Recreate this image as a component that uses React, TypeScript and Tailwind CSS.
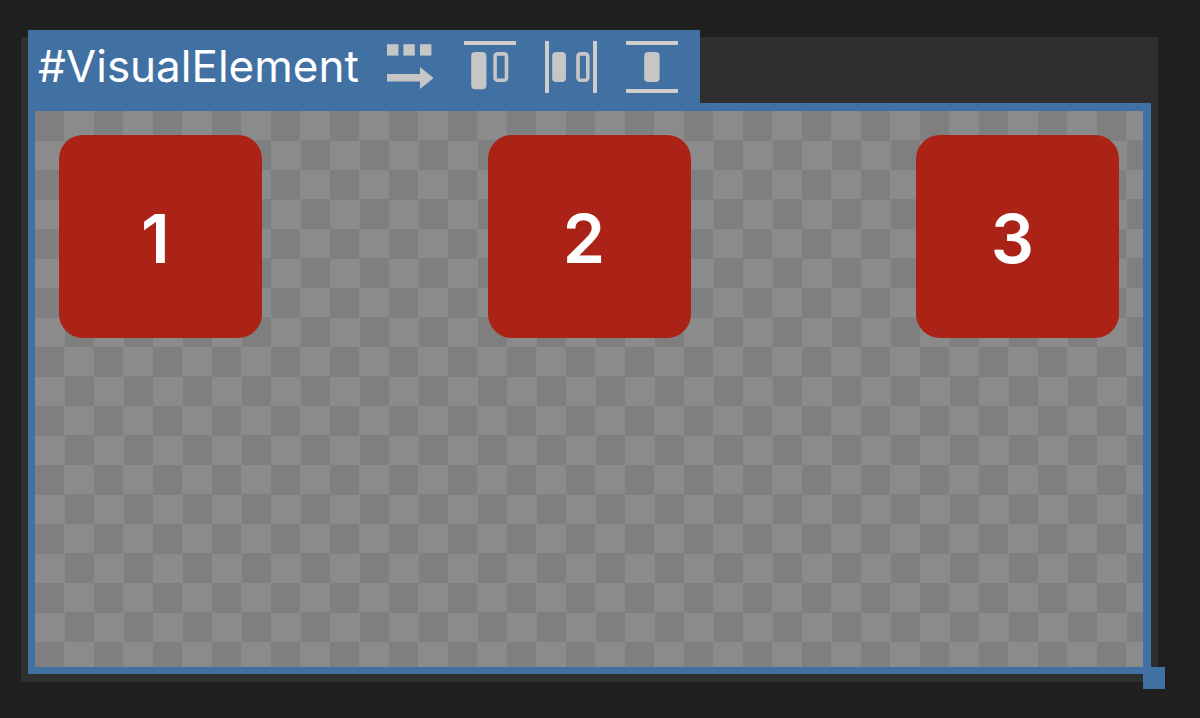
import type { ReactNode } from "react"

const items = ["1", "2", "3"]

function ToolButton({ label, children }: { label: string; children: ReactNode }) {
  return (
    <button type="button" aria-label={label} className="block size-[52px] shrink-0 text-[#c6c6c6]">
      <svg viewBox="0 0 52 52" className="size-full" fill="currentColor" aria-hidden="true">
        {children}
      </svg>
    </button>
  )
}

export default function App() {
  return (
    <main className="flex min-h-screen flex-col bg-[#202020] pt-[37px] pr-[42px] pb-[36px] pl-[21px] font-[Inter,sans-serif]">
      <section className="flex flex-1 flex-col bg-[#2f2f2f] px-[7px] pb-2">
        {/* Header tab */}
        <header className="-mt-[7px] flex h-[73px] items-center self-start bg-[#4171a3] pr-[22px] pl-[10px]">
          <h1 className="pb-[2px] text-[44px] leading-[52px] font-normal text-white">#VisualElement</h1>
          <div className="ml-6 flex gap-[29px]">
            <ToolButton label="Flex direction: row">
              <rect x="4" y="3.2" width="11.4" height="11.4" />
              <rect x="20.4" y="3.2" width="11.4" height="11.4" />
              <rect x="37" y="3.2" width="11.4" height="11.4" />
              <path d="M4 33H37V26L50.6 37L37 48V40.6H4Z" />
            </ToolButton>
            <ToolButton label="Align items: flex start">
              <rect width="52" height="4" fill="#d0cdca" />
              <rect x="7.2" y="11" width="15.2" height="37.2" rx="4" />
              <rect x="31.1" y="12.9" width="11.4" height="26.4" rx="2.4" fill="none" stroke="currentColor" strokeWidth="3.6" />
            </ToolButton>
            <ToolButton label="Justify content: space between">
              <rect width="4" height="52" fill="#d0cdca" />
              <rect x="48" width="4" height="52" fill="#d0cdca" />
              <rect x="7.2" y="11" width="13.8" height="30" rx="4" />
              <rect x="33" y="12.9" width="9.8" height="26.4" rx="2.4" fill="none" stroke="currentColor" strokeWidth="3.6" />
            </ToolButton>
            <ToolButton label="Align content: stretch">
              <rect width="52" height="4" fill="#d0cdca" />
              <rect y="48" width="52" height="4" fill="#d0cdca" />
              <rect x="18.2" y="11" width="15.4" height="30" rx="4" />
            </ToolButton>
          </div>
        </header>

        {/* Canvas */}
        <div className="relative flex flex-1 flex-col border-[7px] border-t-8 border-r-8 border-[#4171a3]">
          <div className="flex flex-1 items-start justify-between bg-[repeating-conic-gradient(#8b8b8b_0_25%,#7f7f7f_0_50%)] bg-size-[59px_59px] p-6">
            {items.map((item) => (
              <div
                key={item}
                className="flex size-[203px] items-center justify-center rounded-3xl bg-[#ab2317] pt-[2px] pr-[10px] text-[68px] leading-[80px] font-semibold text-white"
              >
                {item}
              </div>
            ))}
          </div>
          {/* Resize handle */}
          <span className="absolute -right-[22px] -bottom-[22px] size-[22px] bg-[#4171a3]" />
        </div>
      </section>
    </main>
  )
}
